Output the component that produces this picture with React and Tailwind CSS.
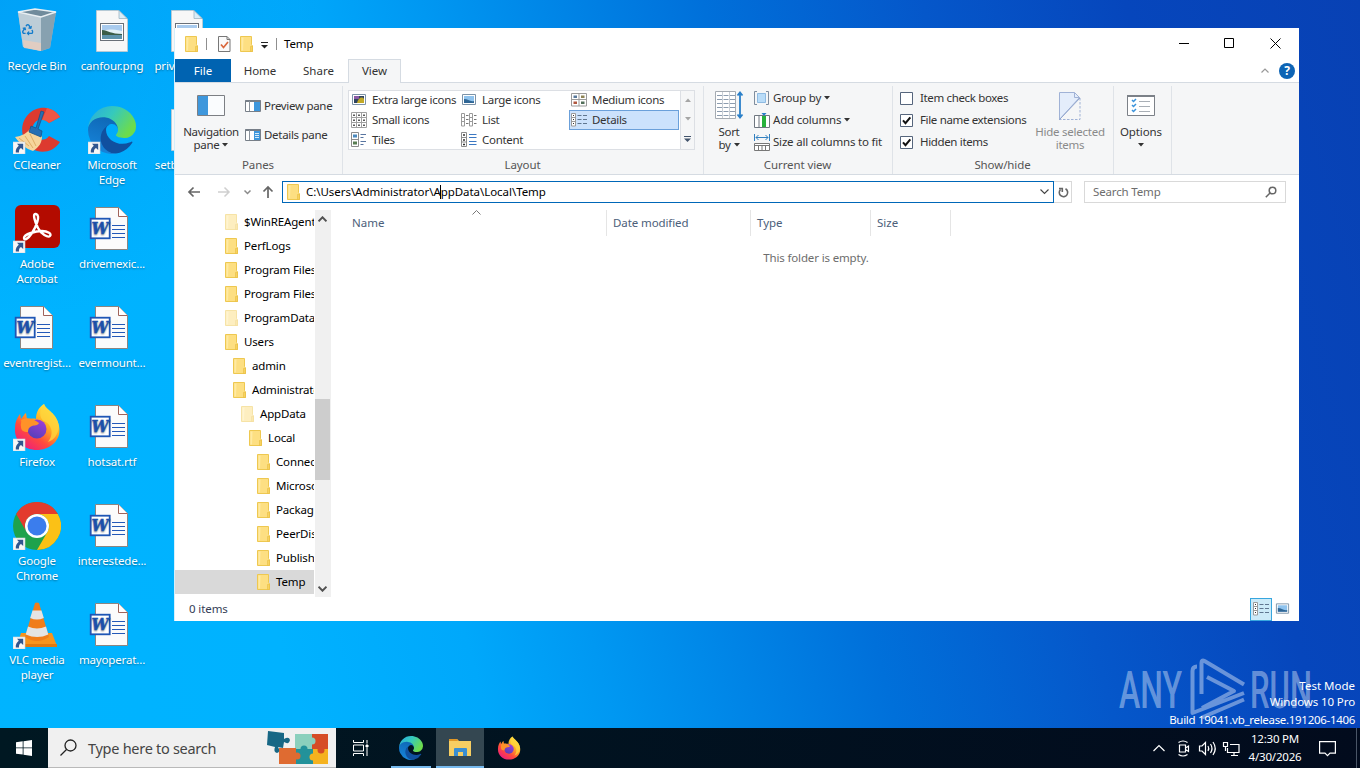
import { FaRecycle } from "react-icons/fa";

const Folder = ({ faded, className = "" }) => (
    <svg width="13" height="16" viewBox="0 0 13 16" className={`shrink-0 ${faded ? "opacity-50" : ""} ${className}`}>
        <path d="M.5.5h11v8l1 1.500v5.500H.5z" fill="#fddf82" stroke="#eec850" />
        <path d="M1.500 1.500h2l-.5 13H1.500z" fill="#ffeaa2" />
        <path d="M10.500 10.500h2v5h-2z" fill="#f8d25f" stroke="#e8bd45" strokeWidth=".6" />
    </svg>
);

const Shortcut = () => (
    <g>
        <rect x="0" y="36" width="12" height="12" fill="#f7f7f7" stroke="#c9d3dc" strokeWidth=".6" />
        <path d="M4 37.800h6.200V44L8 42c-1.700 1.100-2.200 2.400-2 4.500H2.800c-.3-3 .7-5 3-6.800z" fill="#31568f" />
    </g>
);

const BinIcon = () => (
    <svg width="48" height="48" viewBox="0 0 48 48">
        <path d="m5 5 17-3 21 3-6 36-9 3-18-4z" fill="#b9c5ce" fillOpacity=".9" />
        <path d="m5 5 23 5v34l-18-4z" fill="#c3cfd8" fillOpacity=".8" />
        <path d="m28 10 15-5-6 36-9 3z" fill="#8098a8" fillOpacity=".8" />
        <path d="m10 33 18 3v8l-17-3z" fill="#e8cdbd" fillOpacity=".8" />
        <path d="m5 5 17-3 21 3-15 5z" fill="#708b9c" stroke="#e9eff3" strokeWidth="1.500" />
        <FaRecycle x="9" y="17" width="16" height="18" color="#147ccb" />
    </svg>
);

const ImageFile = () => (
    <svg width="48" height="48" viewBox="0 0 48 48">
        <path d="M8.500 3.500h22l9 8.500v32.500h-31z" fill="#f7f7f7" stroke="#c4c8cb" strokeWidth=".8" />
        <path d="M31 3.500v8h8z" fill="#d8edf8" stroke="#9eb4c2" strokeWidth=".8" />
        <rect x="12.500" y="16.500" width="23" height="17" fill="#fff" stroke="#6a7078" />
        <path d="M14 18h20v14H14z" fill="#a9cbee" />
        <path d="M14 25c5-3 8-3 20-1v3H14z" fill="#e4f1f7" />
        <path d="M14 23c6 .5 9 4 20 4v2H14z" fill="#3c5d47" />
        <path d="M14 28h20v4H14z" fill="#5e93ab" />
    </svg>
);

const WordFile = () => (
    <svg width="48" height="48" viewBox="0 0 48 48">
        <path d="M7.500 2.500h23l9 9v33h-32z" fill="#fbfbfb" stroke="#8c8581" />
        <path d="M30.500 2.500v9h9" fill="#fff" stroke="#a0635a" />
        <path d="M24 20.500h13M24 24.500h13M24 28.500h13M24 32.500h13" stroke="#2459b8" strokeWidth="1.200" />
        <rect x="2.700" y="13.700" width="19" height="19.600" fill="#fff" stroke="#1f56b5" strokeWidth="1.800" />
        <text x="12" y="29.300" textAnchor="middle" textLength="17" lengthAdjust="spacingAndGlyphs" fontFamily="DejaVu Serif" fontSize="16.500" fontWeight="bold" fontStyle="italic" fill="#1f56b5" stroke="#1f56b5" strokeWidth=".5">W</text>
    </svg>
);

const CCleanerIcon = () => (
    <svg width="48" height="48" viewBox="0 0 48 48">
        <path d="M47 11 36 17c-8-8-19-1-16 10 2 8 12 9 16 3l11 6C38 50 19 48 12 36 3 17 17 0 33 2c6 1 11 4 14 9z" fill="#dd3a2f" />
        <path d="M47 11 36 17c-2-2-4-3-7-3l5-12c5 1 10 4 13 9z" fill="#ee5645" />
        <path d="M2 31c7-1 12-4 15-8l12 7c0 7-3 11-9 15-7-2-13-7-18-14z" fill="#f6d59c" />
        <path d="m6 32 10 8M12 30l8 12M17 28l6 12" stroke="#dfad65" />
        <path d="m28 5 3 1-6 17 4 2-1 6-12-5 2-6 5 2z" fill="#256fb3" stroke="#17548e" strokeWidth=".8" />
        <Shortcut />
    </svg>
);

const EdgeLogo = ({ size = 48, shortcut }) => (
    <svg width={size} height={size} viewBox="0 0 48 48">
        <defs>
            <linearGradient id="edgeTop" x1="0" y1="0" x2="1" y2=".5">
                <stop offset="0" stopColor="#27a9e2" />
                <stop offset=".5" stopColor="#35c9bd" />
                <stop offset="1" stopColor="#6ddc4c" />
            </linearGradient>
            <linearGradient id="edgeMid" x1=".6" y1="0" x2=".3" y2="1">
                <stop offset="0" stopColor="#0e66b4" />
                <stop offset="1" stopColor="#1786dc" />
            </linearGradient>
        </defs>
        <g transform="scale(.1875)">
            <path transform="translate(-4.63 -4.920)" fill="#10509f" d="M235.680 195.460a93.730 93.730 0 01-10.540 4.710 101.870 101.870 0 01-35.900 6.460c-47.320 0-88.540-32.550-88.540-74.320A31.480 31.480 0 01117.130 105c-42.800 1.800-53.800 46.400-53.800 72.530 0 73.880 68.090 81.370 82.760 81.370 7.910 0 19.840-2.300 27-4.560l1.310-.44a128.340 128.340 0 0066.600-52.800 4 4 0 00-5.320-5.640z" />
            <path fill="url(#edgeMid)" d="M105.730 241.420A79.200 79.200 0 0183 220.080a80.720 80.720 0 0129.500-120c3.120-1.470 8.450-4.130 15.540-4a32.350 32.350 0 0125.690 13 31.880 31.880 0 016.360 18.660c0-.21 24.460-79.600-80-79.600-43.900 0-80 41.660-80 78.210a130.150 130.150 0 0012.110 56 128 128 0 00156.380 67.110 75.550 75.550 0 01-62.780-8z" />
            <path fill="url(#edgeTop)" d="M152.330 148.860c-.81 1.050-3.300 2.500-3.300 5.660 0 2.610 1.700 5.120 4.720 7.230 14.380 10 41.490 8.680 41.560 8.680a59.560 59.560 0 0030.270-8.350A61.380 61.380 0 00256 109.240c.26-22.410-8-37.310-11.340-43.910C223.460 23.840 177.720 0 128 0A128 128 0 000 126.200c.48-36.540 36.800-66.050 80-66.050 3.500 0 23.460.34 42 10.070 16.340 8.580 24.900 18.940 30.850 29.210 6.180 10.670 7.280 24.150 7.280 29.520s-2.740 13.330-7.800 19.910z" />
        </g>
        {shortcut && <Shortcut />}
    </svg>
);

const AcrobatIcon = () => (
    <svg width="48" height="48" viewBox="0 0 48 48">
        <rect x="2" y="0" width="45" height="43" rx="6" fill="#b30b00" />
        <path d="M23 9c5 1 0 13-4 19-4 6-8 8-8 5 0-4 12-7 18-7s10 3 8 5-9-2-12-8-6-15-2-14z" fill="none" stroke="#fff" strokeWidth="2.400" />
        <Shortcut />
    </svg>
);

const FirefoxLogo = ({ size = 48, shortcut }) => (
    <svg width={size} height={size} viewBox="0 0 48 48">
        <defs>
            <linearGradient id="ffBody" x1=".85" y1=".1" x2=".2" y2="1">
                <stop offset="0" stopColor="#fff14a" />
                <stop offset=".35" stopColor="#ffac22" />
                <stop offset=".65" stopColor="#ff4b3c" />
                <stop offset="1" stopColor="#ed1883" />
            </linearGradient>
            <linearGradient id="ffGlobe" x1=".8" y1="0" x2=".3" y2="1">
                <stop offset="0" stopColor="#a03ddb" />
                <stop offset="1" stopColor="#5540b8" />
            </linearGradient>
        </defs>
        <path d="M31 1c2 6 13 9 15 22 3 14-9 24-22 24S1 38 2 25c0-6 2-10 5-14l1 5c2-2 3-5 5-6l1 6c4 0 7-1 9 0 0-7 3-12 8-15z" fill="url(#ffBody)" />
        <path d="M31 1c2 6 13 9 15 22-1 9-5 14-11 16 7-9 3-18-4-21-5-3-5-11 0-17z" fill="#ffd53c" fillOpacity=".8" />
        <circle cx="24" cy="26" r="9.500" fill="url(#ffGlobe)" />
        <path d="M8 17c5-3 11-2 15 1l3 2c-1 3-5 2-7 3-3 1-4 3-4 6-5 0-7-2-7-5-1-3 1-5 0-7z" fill="#ff9228" />
        {shortcut && <Shortcut />}
    </svg>
);

const ChromeIcon = () => (
    <svg width="48" height="48" viewBox="0 0 48 48">
        <circle cx="24" cy="24" r="24" fill="#1ea24c" />
        <path d="M24 12h20.800A24 24 0 0 1 24 48l10.400-18A12 12 0 0 0 24 12z" fill="#fbc116" />
        <path d="M24 12h20.800A24 24 0 0 0 3.200 12l10.400 18A12 12 0 0 1 24 12z" fill="#e33b2e" />
        <circle cx="24" cy="24" r="12" fill="#fff" />
        <circle cx="24" cy="24" r="9.500" fill="#3b7ded" />
        <Shortcut />
    </svg>
);

const VlcIcon = () => (
    <svg width="48" height="48" viewBox="0 0 48 48">
        <path d="M8 32h31l5 13H4z" fill="#f7941d" />
        <path d="M4 43h40v3H4z" fill="#e07a10" />
        <path d="M22 2q2-1 4 0l10 34q-12 8-24 0z" fill="#f07d1a" />
        <path d="m19.500 9.500 9 0 2.300 7.500q-7 3-13.600 0z" fill="#e4e4e4" />
        <path d="m15 25.500q9 4 18 0l2.300 8q-11 5-22.600 0z" fill="#e4e4e4" />
        <Shortcut />
    </svg>
);

const columns = [
    [
        { name: ["Recycle Bin"], icon: <BinIcon /> },
        { name: ["CCleaner"], icon: <CCleanerIcon /> },
        { name: ["Adobe", "Acrobat"], icon: <AcrobatIcon /> },
        { name: ["eventregist..."], icon: <WordFile /> },
        { name: ["Firefox"], icon: <FirefoxLogo shortcut /> },
        { name: ["Google", "Chrome"], icon: <ChromeIcon /> },
        { name: ["VLC media", "player"], icon: <VlcIcon /> },
    ],
    [
        { name: ["canfour.png"], icon: <ImageFile /> },
        { name: ["Microsoft", "Edge"], icon: <EdgeLogo shortcut /> },
        { name: ["drivemexic..."], icon: <WordFile /> },
        { name: ["evermount..."], icon: <WordFile /> },
        { name: ["hotsat.rtf"], icon: <WordFile /> },
        { name: ["interestede..."], icon: <WordFile /> },
        { name: ["mayoperat..."], icon: <WordFile /> },
    ],
    [
        { name: ["privacyt.png"], icon: <ImageFile /> },
        { name: ["setbase.png"], icon: <ImageFile /> },
    ],
];

const DesktopIcons = () => (
    <div className="-ml-px flex pt-[7px]">
        {columns.map((column, i) => (
            <div key={i} className="flex w-[75px] flex-col">
                {column.map(({ name, icon }) => (
                    <div key={name[0]} className="flex h-[99px] flex-col items-center text-[11.5px]/[15px] tracking-[-0.15px] whitespace-nowrap text-white [text-shadow:0_1px_2px_rgba(0,0,0,0.4)]">
                        {icon}
                        <div className="mt-[3px] pl-px text-center">
                            {name.map((line) => (
                                <div key={line}>{line}</div>
                            ))}
                        </div>
                    </div>
                ))}
            </div>
        ))}
    </div>
);

const Caret = ({ className = "" }) => (
    <svg width="6" height="4" viewBox="0 0 6 4" className={`inline-block shrink-0 ${className}`}>
        <path d="M0 0h6L3 3.500z" fill="currentColor" />
    </svg>
);

const TitleBar = () => (
    <div className="flex h-[31px] items-center pl-[10px]">
        <Folder />
        <div className="ml-2 h-3 w-px bg-[#8f8f8f]" />
        <svg width="13" height="16" viewBox="0 0 13 16" className="ml-[11px]">
            <path d="M.5.500h8.500l3 3v12H.5z" fill="#fafafa" stroke="#777" />
            <path d="M9 .500v3h3" fill="none" stroke="#777" />
            <path d="m3 8.500 2.500 3L10 6" fill="none" stroke="#d9673c" strokeWidth="1.700" />
        </svg>
        <Folder className="ml-[9px]" />
        <svg width="7" height="7" viewBox="0 0 7 7" className="mt-[3px] ml-[8px]">
            <path d="M0 .500h7" stroke="#222" />
            <path d="M0 3h7L3.500 6.500z" fill="#222" />
        </svg>
        <div className="ml-2 h-3 w-px bg-[#8f8f8f]" />
        <div className="ml-[7px] text-[11.5px] tracking-[-0.1px] text-black">Temp</div>
        <div className="ml-auto flex">
            <svg width="138" height="31" viewBox="0 0 138 31" fill="none" stroke="#000">
                <path d="M18 15.500h10M109.500 10.500l10 10M119.500 10.500l-10 10" />
                <path d="M63.500 10.500h9v9h-9z" />
            </svg>
        </div>
    </div>
);

const Tabs = () => (
    <div className="flex h-6 items-stretch border-b border-[#d5dbe2] text-[11.5px] text-[#333]">
        <div className="flex w-14 items-center justify-center bg-[#0063b1] text-white">File</div>
        <div className="flex w-[58px] items-center justify-center">Home</div>
        <div className="flex w-[59px] items-center justify-center">Share</div>
        <div className="-mb-px flex w-[53px] items-center justify-center border border-b-0 border-[#d5dbe2] bg-[#f5f6f7] pb-[2px]">View</div>
        <div className="ml-auto flex items-center gap-[10px] pr-1">
            <svg width="8" height="6" viewBox="0 0 8 6" fill="none" stroke="#999" strokeWidth="1.200">
                <path d="m.5 4.500 3.500-3.500 3.500 3.500" />
            </svg>
            <div className="flex size-4 items-center justify-center rounded-full bg-[#0d64b5] text-xs font-bold text-white">?</div>
        </div>
    </div>
);

const RibbonGroup = ({ label, className = "", children }) => (
    <div className={`flex flex-col border-r border-[#dfe3e8] ${className}`}>
        <div className="flex h-[70px]">{children}</div>
        <div className="h-[18px] pr-px text-center text-[11.5px]/[17px] tracking-[-0.1px] text-[#555]">{label}</div>
    </div>
);

const PaneIcon = ({ details }) => (
    <svg width="16" height="12" viewBox="0 0 16 12">
        <path d="M.5.500h15v11H.5z" fill="#fff" stroke="#777f88" />
        <path d="M0 .500h16v1.500H0z" fill="#777f88" />
        <path d="M4.500 1v10" stroke="#8b939c" />
        <path d="M9 2h6v9H9z" fill="#3e97dc" />
        {details && <path d="M10 4.500h4M10 6.500h4M10 8.500h4" stroke="#fff" strokeWidth=".8" />}
    </svg>
);

const Picture = ({ dark }) => (
    <svg width="16" height="16" viewBox="0 0 16 16">
        <path d="M1.500 2.500h13v10h-13z" fill="#fff" stroke="#7c93a8" />
        <path d="M3 4h10v7H3z" fill={dark ? "#304460" : "#8fc3ee"} />
        {dark ? <path d="M6 11c1-5 5-7 7-4v4z" fill="#c2a928" /> : <path d="M3 7c4 0 6 3 10 2v2H3z" fill="#2f6695" />}
        {dark && <path d="M3 4h5v3H3z" fill="#8a5aa5" />}
    </svg>
);

const MediumGrid = () => (
    <svg width="16" height="14" viewBox="0 0 16 14" fill="none">
        <path d="M.5.500h15v12.500H.5zM8 .500v12.500M.5 6.500h15" fill="#fff" stroke="#9b9b9b" />
        <path d="M2.500 2.500h3.500v2.500H2.500z" fill="#58789a" />
        <path d="M10 2.500h3.500v2.500H10z" fill="#8e8455" />
        <path d="M2.500 8.500h3.500v2.500H2.500z" fill="#b0573e" />
        <path d="M10 8.500h3.500v2.500H10z" fill="#516e59" />
    </svg>
);

const SmallGrid = () => (
    <svg width="16" height="16" viewBox="0 0 16 16" fill="none">
        <path d="M.5.500h15v15H.5zM5.500.500v15M10.500.500v15M.5 5.500h15M.5 10.500h15" fill="#fff" stroke="#a0a0a0" />
        <path d="M2 3.200h2M7 3.200h2M12 3.200h2M2 8.200h2M7 8.200h2M12 8.200h2M2 13.200h2M7 13.200h2M12 13.200h2" stroke="#5a5a5a" strokeWidth="1.500" />
    </svg>
);

const ListLines = () => (
    <svg width="16" height="14" viewBox="0 0 16 14" fill="none">
        <path d="M.5.500h3v12.500h-3zM.5 4.500h3M.5 8.500h3M8.500.500h3v12.500h-3zM8.500 4.500h3M8.500 8.500h3" stroke="#9a9a9a" />
        <path d="M5 2.500h2.500M5 6.500h2.500M5 10.500h2.500M13 2.500h2.500M13 6.500h2.500M13 10.500h2.500" stroke="#777" />
    </svg>
);

const DetailLines = () => (
    <svg width="17" height="14" viewBox="0 0 17 14" fill="none">
        <path d="M.5.500h4v12.500h-4zM.5 4.500h4M.5 8.500h4" fill="#fff" stroke="#9a9a9a" />
        <path d="M2 2.500h1M2 6.500h1M2 10.500h1" stroke="#333" />
        <path d="M6.500 2.500h4M6.500 6.500h4M6.500 10.500h4M12 2.500h4M12 6.500h4M12 10.500h4" stroke="#5f7690" />
    </svg>
);

const TilesIcon = ({ content }) => (
    <svg width="16" height="16" viewBox="0 0 16 16" fill="none">
        {content ? (
            <>
                <path d="M.5.500h5v14h-5zM.5 5.500h5M.5 10h5" fill="#fff" stroke="#8c8c8c" />
                <path d="M2 3h2M2 8h2M2 12.500h2" stroke="#333" strokeWidth="1.500" />
                <path d="M8 2.500h7.500M8 5.500h7.500M8 9.500h7.500M8 12.500h7.500" stroke="#3c78c2" />
            </>
        ) : (
            <>
                <path d="M.5.500h7v14h-7zM.5 7.500h7" fill="#fff" stroke="#8c8c8c" />
                <path d="M2 2.500h4v3H2z" fill="#4b89bd" />
                <path d="M2 9.500h4v3H2z" fill="#587d52" />
                <path d="M9.500 2.500H15M9.500 5.500h3M9.500 9.500H15M9.500 12.500h3" stroke="#5875a0" />
            </>
        )}
    </svg>
);

const layouts = [
    ["Extra large icons", <Picture dark />],
    ["Large icons", <Picture />],
    ["Medium icons", <MediumGrid />],
    ["Small icons", <SmallGrid />],
    ["List", <ListLines />],
    ["Details", <DetailLines />],
    ["Tiles", <TilesIcon />],
    ["Content", <TilesIcon content />],
];

const LayoutGallery = () => (
    <div className="mt-1 ml-[5px] flex h-[60px] w-[347px] border border-[#dcdfe4] bg-white">
        <div className="-mt-px grid w-[330px] grid-cols-[110px_110px_110px] grid-rows-[20px_20px_20px]">
            {layouts.map(([label, icon]) => (
                <div
                    key={label}
                    className={`flex items-center gap-1 whitespace-nowrap ${label === "Details" ? "border border-[#6ba0da] bg-[#cce2fc] pl-px" : "pl-[2px]"}`}
                >
                    <span className="flex w-[17px] shrink-0">{icon}</span>
                    {label}
                </div>
            ))}
        </div>
        <div className="ml-auto flex w-[14px] flex-col items-center justify-around border-l border-[#dcdfe4] bg-[#f5f6f7] text-[#a5a5a5]">
            <Caret className="rotate-180" />
            <Caret />
            <svg width="7" height="6" viewBox="0 0 7 6">
                <path d="M0 .500h7" stroke="#41536b" />
                <path d="M0 2.500h7L3.500 6z" fill="#41536b" />
            </svg>
        </div>
    </div>
);

const BigButton = ({ icon, lines, caret, className = "", children }) => (
    <div className={`flex shrink-0 flex-col items-center text-[11.5px]/[13px] ${className}`}>
        <div className="flex h-[39px] items-center">{icon}</div>
        {lines.map((line, i) => (
            <div key={line} className="flex items-center gap-[3px] whitespace-nowrap">
                {line}
                {caret && i === lines.length - 1 && <Caret />}
            </div>
        ))}
        {children}
    </div>
);

const Check = ({ checked, children }) => (
    <div className="flex h-[22px] items-center gap-[7px] tracking-[-0.35px] whitespace-nowrap">
        <svg width="13" height="13" viewBox="0 0 13 13" fill="none" className="shrink-0">
            <path d="M.5.500h12v12H.5z" fill="#fff" stroke="#55657c" />
            {checked && <path d="m3 6.300 2.500 2.900L10.300 3.300" stroke="#111" strokeWidth="2" />}
        </svg>
        {children}
    </div>
);

const Ribbon = () => (
    <div className="flex h-[92px] border-b border-[#d5dbe2] bg-[#f5f6f7] pt-[3px] text-[11.5px] tracking-[-0.3px] text-[#333]">
        <RibbonGroup label="Panes" className="w-[168px]">
            <BigButton
                className="w-[72px]"
                lines={["Navigation", "pane"]}
                caret
                icon={
                    <svg width="28" height="21" viewBox="0 0 28 21">
                        <path d="M.5.500h27v20H.5z" fill="#fafcfe" stroke="#7c7f84" />
                        <path d="M1 1h10v19H1z" fill="#3e97dc" />
                    </svg>
                }
            />
            <div className="-ml-[2px] flex flex-col pt-[5px] whitespace-nowrap">
                <div className="flex h-[29px] items-center gap-[3px]"><PaneIcon />Preview pane</div>
                <div className="flex h-[29px] items-center gap-[3px]"><PaneIcon details />Details pane</div>
            </div>
        </RibbonGroup>
        <RibbonGroup label="Layout" className="w-[361px]">
            <LayoutGallery />
        </RibbonGroup>
        <RibbonGroup label="Current view" className="w-[189px]">
            <BigButton
                className="w-[50px]"
                lines={["Sort", "by"]}
                caret
                icon={
                    <svg width="29" height="29" viewBox="0 0 29 29" fill="none" className="ml-px">
                        <path d="M.5.500h20v27H.5z" fill="#fff" stroke="#a5abb2" />
                        <path d="M2 4.500h18M2 8.500h18M2 12.500h18M2 16.500h18M2 20.500h18M2 24.500h18" stroke="#8c9caf" strokeDasharray="5 1.500" />
                        <path d="M7.500 1v26M14.500 1v26" stroke="#c8ced5" />
                        <path d="M25 3v22M22.500 4.500 25 1.500l2.500 3M22.500 23.500l2.500 3 2.500-3" stroke="#2b80c9" strokeWidth="1.800" />
                    </svg>
                }
            />
            <div className="flex flex-col pt-px tracking-[-0.2px] whitespace-nowrap">
                <div className="flex h-[22px] items-center gap-[4px]">
                    <svg width="15" height="14" viewBox="0 0 15 14" fill="none">
                        <path d="M3 .500H.5v13H3M12 .500h2.500v13H12" stroke="#7f8d9e" />
                        <path d="M3.500 2.500h8v9h-8z" fill="#b9dcf8" stroke="#8fbbe2" />
                    </svg>
                    <span className="flex items-center gap-[3px]">Group by <Caret /></span>
                </div>
                <div className="flex h-[22px] items-center gap-[3px]">
                    <svg width="16" height="15" viewBox="0 0 16 15" fill="none">
                        <path d="M.5 2.500h15v12H.5zM5 2.500v12" fill="#fff" stroke="#6f7780" />
                        <path d="M8 3h4v11H8z" fill="#27b13c" />
                        <path d="M7.500 0h5L10 3z" fill="#287fc8" />
                    </svg>
                    <span className="flex items-center gap-[3px]">Add columns <Caret /></span>
                </div>
                <div className="flex h-[22px] items-center gap-[3px]">
                    <svg width="16" height="17" viewBox="0 0 16 17" fill="none">
                        <path d="M.5 0v7M15.500 0v7M2 3.500h12M4.500 1 2 3.500 4.500 6M11.500 1 14 3.500 11.500 6" stroke="#3280c0" />
                        <path d="M.5 9.500h15v7H.5zM.5 11.500h15M4.500 11v5M8 11v5M11.500 11v5" fill="#fff" stroke="#777" />
                    </svg>
                    Size all columns to fit
                </div>
            </div>
        </RibbonGroup>
        <RibbonGroup label="Show/hide" className="w-[221px]">
            <div className="flex w-[135px] flex-col pt-px pl-[7px]">
                <Check>Item check boxes</Check>
                <Check checked>File name extensions</Check>
                <Check checked>Hidden items</Check>
            </div>
            <BigButton
                className="w-[84px] tracking-[-0.25px] text-[#8a8a8a]"
                lines={["Hide selected", "items"]}
                icon={
                    <svg width="22" height="28" viewBox="0 0 22 28" fill="none">
                        <path d="M.5.500h15l5 5L.5 27.500z" fill="#e4edfb" stroke="#a0b2d6" />
                        <path d="M15.500.500v5h5" stroke="#a0b2d6" />
                        <path d="M21 6v21.500H0" stroke="#a0b2d6" strokeDasharray="2.500 1.500" />
                        <path d="M.5 27.500 21 6" stroke="#91a5cd" />
                    </svg>
                }
            />
        </RibbonGroup>
        <RibbonGroup className="w-[58px]">
            <BigButton
                className="w-[54px] tracking-[-0.1px]"
                lines={["Options"]}
                icon={
                    <svg width="28" height="21" viewBox="0 0 28 21" fill="none">
                        <path d="M.5.500h27v20H.5z" fill="#fff" stroke="#7c8188" />
                        <path d="M0 1h28" stroke="#7c8188" strokeWidth="2" />
                        <path d="m5 5 1.500 1.500L9 4M5 10l1.500 1.500L9 9M5 15l1.500 1.500L9 14" stroke="#3a93db" strokeWidth="1.500" />
                        <path d="M12 6.500h11M12 11.500h11M12 16.500h11" stroke="#a9afb6" />
                    </svg>
                }
            >
                <Caret className="mt-[5px]" />
            </BigButton>
        </RibbonGroup>
    </div>
);

const AddressBar = () => (
    <div className="flex h-[33px] items-center pt-px pl-[11px] text-[11.5px]">
        <svg width="96" height="20" viewBox="0 0 96 20" fill="none">
            <path d="M14 10H3M7.500 5.500 3 10l4.500 4.500" stroke="#666" strokeWidth="1.700" />
            <path d="M32 10h11M38.500 5.500 43 10l-4.500 4.500" stroke="#cfcfcf" strokeWidth="1.500" />
            <path d="m58.500 8.500 3 3 3-3" stroke="#8a8a8a" strokeWidth="1.500" />
            <path d="M82 16V5M77.500 9.500 82 5l4.500 4.500" stroke="#666" strokeWidth="1.700" />
        </svg>
        <div className="flex h-[22px] w-[772px] items-center border border-[#0067b8] pl-1">
            <Folder />
            <div className="ml-[6px] flex items-center tracking-[-0.05px] whitespace-nowrap text-black">
                C:\Users\Administrator\A
                <span className="-mx-[0.5px] h-[14px] w-px bg-black" />
                ppData\Local\Temp
            </div>
            <svg width="9" height="6" viewBox="0 0 9 6" fill="none" stroke="#444" strokeWidth="1.100" className="mr-1 ml-auto">
                <path d="m.5.500 4 4 4-4" />
            </svg>
        </div>
        <div className="flex h-[22px] w-[18px] items-center justify-center border border-l-0 border-[#d9d9d9]">
            <svg width="11" height="12" viewBox="0 0 11 12" fill="none" stroke="#666" strokeWidth="1.600" className="ml-[2px]">
                <path d="M7.500 2.800A4.200 4.200 0 1 1 2.500 3.500M1 2.500h3.300V6" />
            </svg>
        </div>
        <div className="ml-3 flex h-[22px] w-[202px] items-center justify-between border border-[#d9d9d9] pr-2 pl-2 tracking-[-0.15px] text-[#6d6d6d]">
            Search Temp
            <svg width="12" height="12" viewBox="0 0 12 12" fill="none" stroke="#666" strokeWidth="1.500">
                <circle cx="7.500" cy="4.500" r="3.300" />
                <path d="M5 7 .8 11.200" />
            </svg>
        </div>
    </div>
);

const tree = [
    { name: "$WinREAgent", pad: "pl-[50px]", faded: true },
    { name: "PerfLogs", pad: "pl-[50px]" },
    { name: "Program Files", pad: "pl-[50px]" },
    { name: "Program Files (x86)", pad: "pl-[50px]" },
    { name: "ProgramData", pad: "pl-[50px]", faded: true },
    { name: "Users", pad: "pl-[50px]" },
    { name: "admin", pad: "pl-[58px]" },
    { name: "Administrator", pad: "pl-[58px]" },
    { name: "AppData", pad: "pl-[66px]", faded: true },
    { name: "Local", pad: "pl-[74px]" },
    { name: "ConnectedDevices", pad: "pl-[82px]" },
    { name: "Microsoft", pad: "pl-[82px]" },
    { name: "Packages", pad: "pl-[82px]" },
    { name: "PeerDistRepub", pad: "pl-[82px]" },
    { name: "Publishers", pad: "pl-[82px]" },
    { name: "Temp", pad: "pl-[82px]", selected: true },
];

const Tree = () => (
    <div className="flex w-[156px] pt-[2px]">
        <div className="w-[139px] overflow-hidden">
            {tree.map(({ name, pad, faded, selected }) => (
                <div key={name} className={`flex h-6 items-center gap-[6px] text-[11.5px] tracking-[-0.15px] whitespace-nowrap text-black ${pad} ${selected ? "bg-[#d9d9d9]" : ""}`}>
                    <Folder faded={faded} />
                    {name}
                </div>
            ))}
        </div>
        <div className="ml-px flex h-[387px] w-4 flex-col items-center bg-[#f0f0f0]">
            <svg width="9" height="6" viewBox="0 0 9 6" fill="none" stroke="#505050" strokeWidth="2" className="mt-[6px] mr-px">
                <path d="m.5 5.300 4-4 4 4" />
            </svg>
            <div className="mt-[177px] mr-px h-[81px] w-[15px] bg-[#cdcdcd]" />
            <svg width="9" height="6" viewBox="0 0 9 6" fill="none" stroke="#505050" strokeWidth="2" className="mt-auto mr-px mb-[5px]">
                <path d="m.5.700 4 4 4-4" />
            </svg>
        </div>
    </div>
);

const FileList = () => (
    <div className="flex flex-1 flex-col pt-[2px]">
        <div className="flex h-[26px] items-center text-[11.5px] text-[#4c607a]">
            <div className="relative flex h-full w-[276px] items-center border-r border-[#e5e5e5] pl-[21px]">
                Name
                <svg width="9" height="6" viewBox="0 0 9 6" fill="none" stroke="#777" className="absolute top-0 left-[141px]">
                    <path d="m.5 4.500 4-4 4 4" />
                </svg>
            </div>
            <div className="flex h-full w-36 items-center border-r border-[#e5e5e5] pl-[6px] tracking-[-0.1px]">Date modified</div>
            <div className="flex h-full w-[120px] items-center border-r border-[#e5e5e5] pl-[6px]">Type</div>
            <div className="flex h-full w-20 items-center border-r border-[#e5e5e5] pl-[6px]">Size</div>
        </div>
        <div className="mt-[13px] pl-[2px] text-center text-[11.5px]/[17px] tracking-[-0.15px] text-[#6d6d6d]">This folder is empty.</div>
    </div>
);

const ExplorerWindow = () => (
    <div className="absolute top-7 left-[175px] flex h-[593px] w-[1124px] flex-col bg-white shadow-[-1px_0_0_0_#d5effb]">
        <TitleBar />
        <Tabs />
        <Ribbon />
        <AddressBar />
        <div className="flex h-[389px]">
            <Tree />
            <FileList />
        </div>
        <div className="flex h-6 items-center pr-[9px] pl-[14px] text-[11.5px] tracking-[-0.1px] text-[#333c55]">
            0 items
            <div className="ml-auto flex h-[23px] w-[22px] items-center justify-center border border-[#37a6de] bg-[#cceaf8]">
                <DetailLines />
            </div>
            <div className="ml-[3px] flex w-[15px]"><Picture /></div>
        </div>
    </div>
);

const Watermark = () => (
    <div className="absolute right-[3px] bottom-[39px] flex h-[72px] w-[240px] flex-col justify-end">
        <svg width="200" height="72" viewBox="0 0 200 72" className="absolute top-0 left-0" fill="#fff" fillOpacity=".4">
            <text x="2" y="50.500" fontFamily="Roboto" fontWeight="500" fontSize="52" textLength="63" lengthAdjust="spacingAndGlyphs">ANY</text>
            <text x="133" y="50.500" fontFamily="Roboto" fontWeight="500" fontSize="52" textLength="62" lengthAdjust="spacingAndGlyphs">RUN</text>
            <path d="M80 9.500q-4.500 0-4.500 4.500v42L127 36M84.500 37V6q0-3.500 3-2l39.500 23.500M85 60.500l42-18M90 20l27 14-32 17" fill="none" stroke="#fff" strokeOpacity=".4" strokeWidth="4" strokeLinejoin="round" />
        </svg>
        <div className="relative flex flex-col items-end pr-[2px] pb-px text-[11.5px]/[17px] tracking-[-0.3px] whitespace-nowrap text-white">
            <div className="tracking-normal">Test Mode</div>
            <div className="-mt-px mb-px tracking-[-0.1px]">Windows 10 Pro</div>
            <div>Build 19041.vb_release.191206-1406</div>
        </div>
    </div>
);

const Puzzle = () => (
    <svg width="64" height="38" viewBox="0 0 64 38" className="overflow-visible">
        <path d="M24 5h17v16H24z" fill="#8bd0bd" />
        <path d="M41 5h16v15H41z" fill="#d64c26" />
        <path d="M8 19h17v16H8z" fill="#df6b31" />
        <path d="M25 20h17v15H25z" fill="#23929a" />
        <path d="M42 20h15v15H42z" fill="#f5b21f" />
        <circle cx="41" cy="12" r="3.500" fill="#8bd0bd" />
        <circle cx="33" cy="20" r="3.500" fill="#23929a" />
        <circle cx="26" cy="27" r="3.500" fill="#df6b31" />
        <circle cx="50" cy="21" r="3.500" fill="#d64c26" />
        <circle cx="42" cy="28" r="3.500" fill="#f5b21f" />
        <path d="m-3 2 16 2v6q5-3 6 1-1 5-6 2l-1 6-5-1q3 5-1 6-4-1-2-6l-8-2z" fill="#176785" />
    </svg>
);

const Taskbar = () => (
    <div className="absolute bottom-0 left-0 flex h-10 w-full items-stretch bg-linear-to-r from-[#001822] to-[#020b1d] text-white">
        <div className="flex w-12 items-center justify-center">
            <svg width="16" height="16" viewBox="0 0 16 16" fill="#fff">
                <path d="m0 2.200 6.700-.9v6.200H0zM7.500 1.200 16 0v7.500H7.500zM0 8.300h6.700v6.300L0 13.700zM7.500 8.300H16V16l-8.500-1.200z" />
            </svg>
        </div>
        <div className="flex w-72 items-center border-b border-[#b9b9b9] bg-[#f0f0f0] text-[#454545]">
            <svg width="17" height="17" viewBox="0 0 17 17" fill="none" stroke="#222" strokeWidth="1.300" className="ml-3">
                <circle cx="10.500" cy="6.500" r="5.500" />
                <path d="m6.500 10.500-6 6" />
            </svg>
            <div className="ml-[11px] pt-[2px] text-[14.500px] tracking-[-0.28px]">Type here to search</div>
            <div className="mr-px ml-auto"><Puzzle /></div>
        </div>
        <div className="flex w-12 items-center justify-center">
            <svg width="17" height="16" viewBox="0 0 17 16" fill="none" stroke="#fff">
                <path d="M1.500 0v2.500h10V0M1.500 5h10v6h-10zM1.500 16v-2.500h10V16M15 0v3.500M15 8v8" />
                <path d="M14 5h2v2h-2z" fill="#fff" />
            </svg>
        </div>
        <div className="flex w-[52px] flex-col items-center justify-between pt-2 pl-[2px]">
            <EdgeLogo size={24} />
            <div className="h-[2px] w-10 bg-[#76b9ed]" />
        </div>
        <div className="flex w-12 flex-col items-center justify-between bg-[#344751] pt-[10px]">
            <svg width="22" height="18" viewBox="0 0 22 18">
                <path d="M0 1h8l2 2h12v15H0z" fill="#f7ce62" />
                <path d="M0 1h8l1 2H0z" fill="#e19725" />
                <path d="M5 18v-7q0-1 1-1h11q1 0 1 1v7h-4v-4H9v4z" fill="#3b8ed0" />
            </svg>
            <div className="h-[2px] w-full bg-[#76b9ed]" />
        </div>
        <div className="flex w-[50px] items-center justify-center"><FirefoxLogo size={24} /></div>
        <div className="ml-auto flex items-center">
            <svg width="88" height="20" viewBox="0 0 88 20" fill="none" stroke="#fff" strokeWidth="1.200" className="mr-[5px]">
                <path d="m1.500 13 5.500-5.500L12.500 13" />
                <path d="M27.500 7h6v7h-6zM33.500 10l3-2v5.500l-3-2M26.500 4.500q4.500-3 9 0M26.500 16.500q4.500 3 9 0" />
                <path d="M47.500 8h2.500l3.500-3.500v12L50 13h-2.500zM56 8q1.500 2.500 0 5M58.500 6q3 4.500 0 9M61 4q4.500 6.500 0 13" />
                <path d="M78 6.500h9v8H75.500V10M79 17.500h7M82 14.500v3M71.500 4.500h4v4h-4zM73.500 8.500v4.500" />
            </svg>
            <div className="flex w-[60px] flex-col items-center text-[11.5px]/[18px] tracking-[-0.2px] whitespace-nowrap">
                <div>12:30 PM</div>
                <div>4/30/2026</div>
            </div>
            <svg width="17" height="17" viewBox="0 0 17 17" fill="none" stroke="#fff" strokeWidth="1.200" className="mr-5 ml-[14px]">
                <path d="M.6 1.600h15.800v11.500H11L8.500 15.600 6 13.100H.6z" />
            </svg>
            <div className="mr-[3px] h-10 w-px bg-[#4a5566]" />
        </div>
    </div>
);

const App = () => {
    return (
        <div className="relative h-[768px] w-[1360px] overflow-hidden bg-[radial-gradient(circle_at_0_0,rgba(0,145,240,0.5)_0,transparent_320px),linear-gradient(75deg,#00b4ff_0%,#00b2ff_20%,#00a8fb_32%,#0098f2_40%,#0070da_58%,#0557ca_72%,#0646bc_85%,#0841b4_100%)] font-['Noto_Sans','Open_Sans',sans-serif]">
            <DesktopIcons />
            <ExplorerWindow />
            <Watermark />
            <Taskbar />
        </div>
    );
};

export default App;
